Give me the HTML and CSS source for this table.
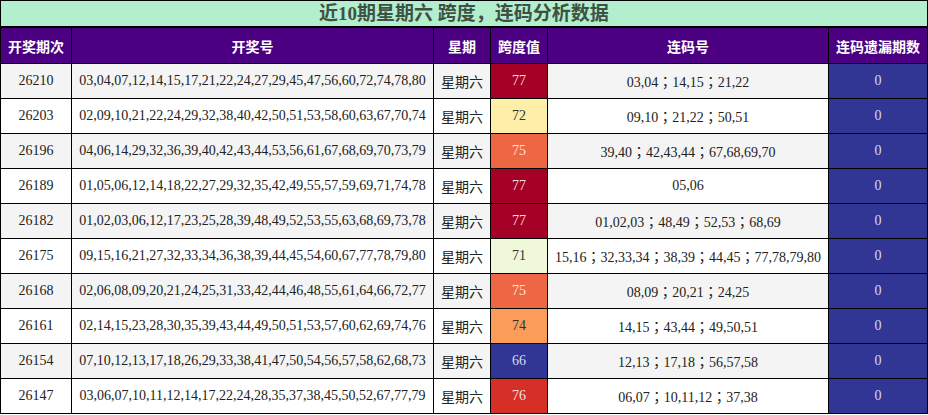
FILE: index.html
```html
<!DOCTYPE html>
<html lang="zh">
<head>
<meta charset="utf-8">
<title>近10期星期六 跨度，连码分析数据</title>
<link rel="stylesheet" href="styles.css">
</head>
<body>
<div class="board">
  <div class="title">近10期星期六 跨度，连码分析数据</div>

  <div class="th">开奖期次</div>
  <div class="th">开奖号</div>
  <div class="th">星期</div>
  <div class="th">跨度值</div>
  <div class="th">连码号</div>
  <div class="th">连码遗漏期数</div>

  <div class="td odd">26210</div>
  <div class="td odd">03,04,07,12,14,15,17,21,22,24,27,29,45,47,56,60,72,74,78,80</div>
  <div class="td odd cjk">星期六</div>
  <div class="td span s77">77</div>
  <div class="td odd lian">03,04；14,15；21,22</div>
  <div class="td miss">0</div>

  <div class="td">26203</div>
  <div class="td">02,09,10,21,22,24,29,32,38,40,42,50,51,53,58,60,63,67,70,74</div>
  <div class="td cjk">星期六</div>
  <div class="td span s72">72</div>
  <div class="td lian">09,10；21,22；50,51</div>
  <div class="td miss">0</div>

  <div class="td odd">26196</div>
  <div class="td odd">04,06,14,29,32,36,39,40,42,43,44,53,56,61,67,68,69,70,73,79</div>
  <div class="td odd cjk">星期六</div>
  <div class="td span s75">75</div>
  <div class="td odd lian">39,40；42,43,44；67,68,69,70</div>
  <div class="td miss">0</div>

  <div class="td">26189</div>
  <div class="td">01,05,06,12,14,18,22,27,29,32,35,42,49,55,57,59,69,71,74,78</div>
  <div class="td cjk">星期六</div>
  <div class="td span s77">77</div>
  <div class="td lian">05,06</div>
  <div class="td miss">0</div>

  <div class="td odd">26182</div>
  <div class="td odd">01,02,03,06,12,17,23,25,28,39,48,49,52,53,55,63,68,69,73,78</div>
  <div class="td odd cjk">星期六</div>
  <div class="td span s77">77</div>
  <div class="td odd lian">01,02,03；48,49；52,53；68,69</div>
  <div class="td miss">0</div>

  <div class="td">26175</div>
  <div class="td">09,15,16,21,27,32,33,34,36,38,39,44,45,54,60,67,77,78,79,80</div>
  <div class="td cjk">星期六</div>
  <div class="td span s71">71</div>
  <div class="td lian">15,16；32,33,34；38,39；44,45；77,78,79,80</div>
  <div class="td miss">0</div>

  <div class="td odd">26168</div>
  <div class="td odd">02,06,08,09,20,21,24,25,31,33,42,44,46,48,55,61,64,66,72,77</div>
  <div class="td odd cjk">星期六</div>
  <div class="td span s75">75</div>
  <div class="td odd lian">08,09；20,21；24,25</div>
  <div class="td miss">0</div>

  <div class="td">26161</div>
  <div class="td">02,14,15,23,28,30,35,39,43,44,49,50,51,53,57,60,62,69,74,76</div>
  <div class="td cjk">星期六</div>
  <div class="td span s74">74</div>
  <div class="td lian">14,15；43,44；49,50,51</div>
  <div class="td miss">0</div>

  <div class="td odd">26154</div>
  <div class="td odd">07,10,12,13,17,18,26,29,33,38,41,47,50,54,56,57,58,62,68,73</div>
  <div class="td odd cjk">星期六</div>
  <div class="td span s66">66</div>
  <div class="td odd lian">12,13；17,18；56,57,58</div>
  <div class="td miss">0</div>

  <div class="td">26147</div>
  <div class="td">03,06,07,10,11,12,14,17,22,24,28,35,37,38,45,50,52,67,77,79</div>
  <div class="td cjk">星期六</div>
  <div class="td span s76">76</div>
  <div class="td lian">06,07；10,11,12；37,38</div>
  <div class="td miss">0</div>
</div>
</body>
</html>
```

FILE: styles.css
```css
html, body {
  margin: 0;
  padding: 0;
  background: #ffffff;
}

.board {
  width: 928px;
  box-sizing: border-box;
  display: grid;
  grid-template-columns: 70px 361px 56px 56px 280px 98px;
  grid-template-rows: 26px 35px repeat(10, 34px);
  gap: 1px;
  padding: 1px;
  background: #000000;
  font-family: "Liberation Serif", "Noto Sans CJK SC", serif;
  font-size: 14px;
  color: #222222;
}

.title {
  grid-column: 1 / -1;
  margin-bottom: 1px;
  background: #b3eecf;
  color: #3e5242;
  font-size: 19px;
  font-weight: bold;
  display: flex;
  align-items: center;
  justify-content: center;
  line-height: 1;
}

.th {
  background: #4b0082;
  color: #ffffff;
  font-family: "Noto Sans CJK SC", sans-serif;
  font-weight: bold;
  font-size: 14px;
  display: flex;
  align-items: center;
  justify-content: center;
}

.td {
  background: #ffffff;
  display: flex;
  align-items: center;
  justify-content: center;
  white-space: nowrap;
  color: #222222;
}

.td.odd {
  background: #f4f4f4;
}

.cjk {
  font-family: "Noto Sans CJK SC", sans-serif;
}

.lian {
  font-family: "Liberation Serif", "Noto Sans CJK TC", serif;
}

.span {
  color: #333333;
}

.s77 { background: #a50026; color: #f2dede; }
.s76 { background: #d62f27; color: #f6e0de; }
.s75 { background: #ef6644; color: #fbe6df; }
.s74 { background: #fb9d59; color: #333333; }
.s72 { background: #feefa8; color: #333333; }
.s71 { background: #eff9da; color: #333333; }
.s66 { background: #313695; color: #d8d9ee; }

.miss {
  background: #313695;
  color: #d8d9ee;
}
```
